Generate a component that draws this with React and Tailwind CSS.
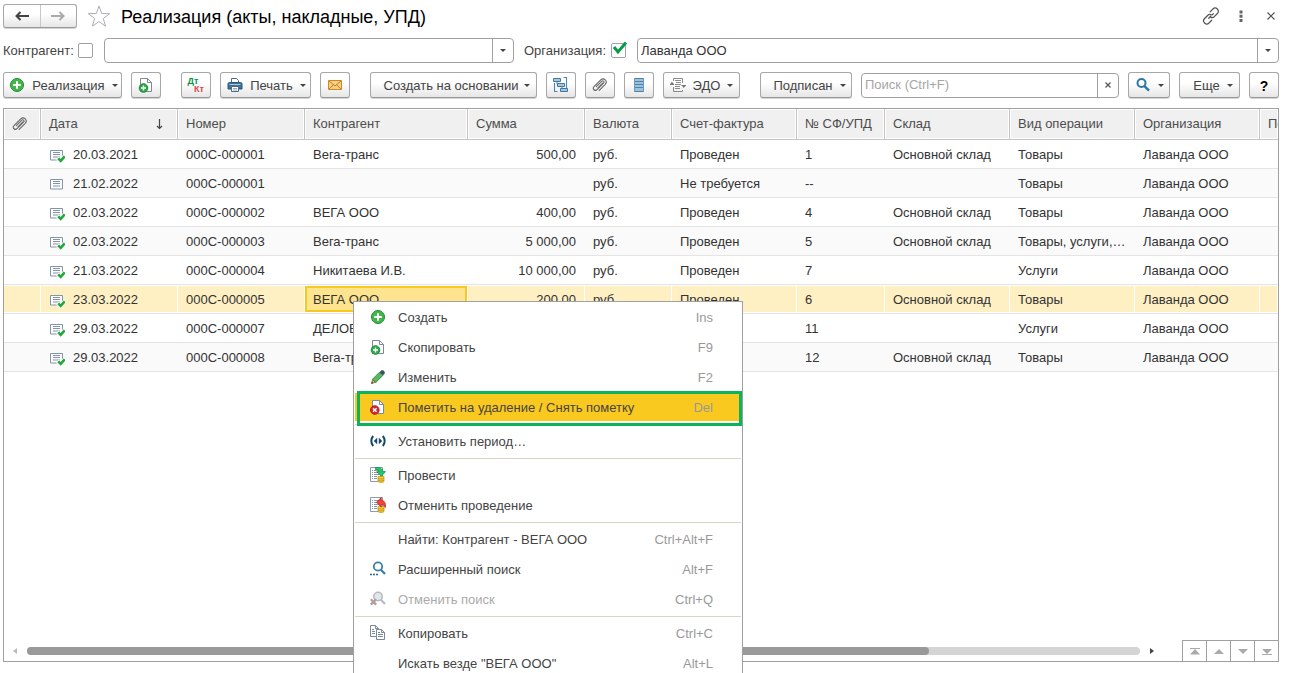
import React from "react";

const columns = [
  { key: "date", title: "Дата", width: "w-[137px]" },
  { key: "number", title: "Номер", width: "w-[127px]" },
  { key: "partner", title: "Контрагент", width: "w-[163px]" },
  { key: "sum", title: "Сумма", width: "w-[117px]" },
  { key: "currency", title: "Валюта", width: "w-[87px]" },
  { key: "invoice", title: "Счет-фактура", width: "w-[125px]" },
  { key: "invoiceNo", title: "№ СФ/УПД", width: "w-[88px]" },
  { key: "store", title: "Склад", width: "w-[125px]" },
  { key: "kind", title: "Вид операции", width: "w-[125px]" },
  { key: "org", title: "Организация", width: "w-[125px]" },
];

const store = "Основной склад";
const org = "Лаванда ООО";
const rows = [
  { date: "20.03.2021", number: "000С-000001", partner: "Вега-транс", sum: "500,00", currency: "руб.", invoice: "Проведен", invoiceNo: "1", store, kind: "Товары", org, posted: true },
  { date: "21.02.2022", number: "000С-000001", partner: "", sum: "", currency: "руб.", invoice: "Не требуется", invoiceNo: "--", store: "", kind: "Товары", org, posted: false },
  { date: "02.03.2022", number: "000С-000002", partner: "ВЕГА ООО", sum: "400,00", currency: "руб.", invoice: "Проведен", invoiceNo: "4", store, kind: "Товары", org, posted: true },
  { date: "02.03.2022", number: "000С-000003", partner: "Вега-транс", sum: "5 000,00", currency: "руб.", invoice: "Проведен", invoiceNo: "5", store, kind: "Товары, услуги,…", org, posted: true },
  { date: "21.03.2022", number: "000С-000004", partner: "Никитаева И.В.", sum: "10 000,00", currency: "руб.", invoice: "Проведен", invoiceNo: "7", store: "", kind: "Услуги", org, posted: true },
  { date: "23.03.2022", number: "000С-000005", partner: "ВЕГА ООО", sum: "200,00", currency: "руб.", invoice: "Проведен", invoiceNo: "6", store, kind: "Товары", org, posted: true, selected: true },
  { date: "29.03.2022", number: "000С-000007", partner: "ДЕЛОВОЙ", sum: "", currency: "", invoice: "", invoiceNo: "11", store: "", kind: "Услуги", org, posted: true },
  { date: "29.03.2022", number: "000С-000008", partner: "Вега-транс", sum: "", currency: "", invoice: "", invoiceNo: "12", store, kind: "Товары", org, posted: true },
];

function Icon({ children, className = "h-4 w-4" }) {
  return (
    <svg viewBox="0 0 16 16" className={`shrink-0 ${className}`} fill="none" aria-hidden="true">
      {children}
    </svg>
  );
}

const Plus = () => (
  <Icon>
    <circle cx="8" cy="8" r="6.5" fill="#45b749" stroke="#1f8a3b" />
    <path d="M8 4.2v7.6M4.2 8h7.6" stroke="#fff" strokeWidth="2" />
  </Icon>
);

const page = (
  <>
    <path d="M2.5 1.5h7l4 4v9h-11z" fill="#fff" stroke="#7a8a99" />
    <path d="M9.5 1.5v4h4" stroke="#7a8a99" />
  </>
);

const CopyAdd = () => (
  <Icon>
    {page}
    <circle cx="5.5" cy="11" r="4.3" fill="#2fa84a" stroke="#1f8a3b" />
    <path d="M5.5 8.500v5M3 11h5" stroke="#fff" strokeWidth="1.400" />
  </Icon>
);

const MarkDelete = () => (
  <Icon>
    {page}
    <circle cx="4.800" cy="11" r="4.300" fill="#d42a33" stroke="#b01c26" />
    <path d="M3 9.200l3.600 3.600M6.600 9.200L3 12.800" stroke="#fff" strokeWidth="1.300" />
  </Icon>
);

const Pencil = () => (
  <Icon>
    <path d="M1.500 14.500l1.200-4.200 3 3z" fill="#e9b45c" stroke="#7a5a2a" strokeWidth=".8" />
    <path d="M2.500 10.200l7-7 3.300 3.300-7 7z" fill="#57b85c" stroke="#2c7a3c" strokeWidth=".8" />
    <path d="M9.500 3.200l1.900-1.900h1.800l1.500 1.500v1.800L12.800 6.500z" fill="#3f5163" />
    <path d="M1.300 14.800l.6-2 1.300 1.300z" fill="#444" />
  </Icon>
);

const Period = () => (
  <Icon>
    <path d="M3.200 3C.7 5.800.7 10.200 3.200 13M12.800 3c2.500 2.800 2.500 7.200 0 10" stroke="#12486b" strokeWidth="2" />
    <path d="M7.200 4.800v6.400L3.800 8zM8.800 4.800v6.400L12.200 8z" fill="#12486b" />
  </Icon>
);

const docLines = (
  <>
    <path d="M.5.5h12v14H.5z" fill="#fff" stroke="#8a9cae" />
    <path d="M2 3.500h1M4 3.500h5M2 5.500h1M4 5.500h5M2 7.500h1M4 7.500h5M2 9.500h1M4 9.500h3M2 11.500h1M4 11.500h3" stroke="#8496a8" />
  </>
);

const coins = (
  <>
    <path d="M8 9.500h6v5c-1 1.300-5 1.300-6 0z" fill="#f7cf3c" stroke="#c99a18" strokeWidth=".8" />
    <path d="M8 11.300c1 1 5 1 6 0M8 13.200c1 1 5 1 6 0" stroke="#b98a12" strokeWidth=".8" />
  </>
);

const Post = () => (
  <Icon>
    {docLines}
    {coins}
    <path d="M5.500.6c4-.4 7 .7 7.300 4h2.700l-4.300 4.700-4.300-4.700h2.600c0-1.500-1.500-2.200-4-2z" fill="#22c86a" stroke="#0f9347" strokeWidth=".8" />
  </Icon>
);

const Unpost = () => (
  <Icon>
    {docLines}
    {coins}
    <path d="M11.200.6v2.600c3.200.4 5 3 4 7.300-.7-2-2-2.900-4-3v2.600L6.600 5.200z" fill="#f2423a" stroke="#b81f1f" strokeWidth=".8" />
  </Icon>
);

const AdvancedSearch = () => (
  <Icon>
    <circle cx="8" cy="5.500" r="4.200" stroke="#3d7ea6" strokeWidth="1.800" />
    <path d="M10.700 8.500l4.300 4.500" stroke="#3d7ea6" strokeWidth="2.200" />
    <path d="M0 13.500h2M3 13.500h2M6 13.500h2" stroke="#2f678c" strokeWidth="1.600" />
  </Icon>
);

const CancelSearch = () => (
  <Icon>
    <circle cx="8" cy="5.500" r="4.200" fill="#e3e7ea" stroke="#b5bcc2" strokeWidth="1.600" />
    <path d="M10.700 8.500l4.300 4.500" stroke="#b5bcc2" strokeWidth="2.200" />
    <path d="M.8 8.200l5.400 5.400M6.200 8.200L.8 13.600" stroke="#b29c9c" strokeWidth="2.200" />
  </Icon>
);

const CopyPages = () => (
  <Icon>
    <path d="M.5.5h5l3 3v8h-8z" fill="#fff" stroke="#7a8a99" />
    <path d="M5.500.500v3h3M2 4.500h2M2 6.500h3M2 8.500h3" stroke="#7a8a99" />
    <path d="M6.500 4.500h5l3 3v7h-8z" fill="#fff" stroke="#7a8a99" />
    <path d="M11.500 4.500v3h3M8 7.500h2M8 9.500h5M8 11.500h5" stroke="#7a8a99" />
  </Icon>
);

const Clip = () => (
  <Icon>
    <path
      d="M4.300 9.600l5.300-5.300c1.400-1.400 3.300.4 1.900 1.900l-6.200 6.200c-2.500 2.400-5.500-.5-3.100-3l6.300-6.300c3.300-3.200 7.800 1 4.500 4.500l-5.800 5.800M6 10.800l4.600-4.600"
      stroke="#666"
      strokeWidth="1.100"
      strokeLinecap="round"
    />
  </Icon>
);

const Structure = () => (
  <Icon>
    <path d="M10.500.5h3v12M1.500 6v8.500h3" stroke="#4d86b0" strokeWidth="1.100" />
    <path d="M4 4.500v3h3M9 9v3h2" stroke="#4d86b0" />
    <path d="M.5 1.500h7v3h-7zM4.500 6.500h7v3h-7zM7.500 11.500h7v3h-7z" fill="#a9c6dc" stroke="#3d78a4" />
  </Icon>
);

const Register = () => (
  <Icon>
    <path d="M3 1h10v14H3z" fill="#9fc0d8" />
    <path d="M3 1.500h10M3 4.500h10M3 7.500h10M3 10.500h10M3 14.500h10" stroke="#4a84ac" />
    <path d="M3.500 1v14M12.500 1v14" stroke="#6c9cbd" />
  </Icon>
);

const Edo = () => (
  <Icon>
    <path d="M3.500 4V1.500h9V6M3.500 10v4.500h9V13" stroke="#8a8a8a" />
    <path d="M5 3.500h6M6 5.500h5M5 7.500h6M5 9.500h5M5 11.500h5" stroke="#8a8a8a" />
    <path d="M0 7.500h4M11.500 8.500h4.500" stroke="#777" strokeWidth="1.200" />
    <path d="M2 4.500v3H0zM4 7.500H0L2.500 5zM12 8.500h4L13.500 11z" fill="#777" />
  </Icon>
);

const Printer = () => (
  <Icon>
    <path d="M4.500 6V1.500h5l2 2V6" fill="#fff" stroke="#4a6a85" />
    <path d="M2.500 5.500h11c1 0 1.500.5 1.500 1.500v5H1V7c0-1 .5-1.500 1.500-1.500z" fill="#3f7198" stroke="#2d5775" />
    <path d="M2.500 7.500h11" stroke="#a8c6dc" />
    <path d="M4.500 9.500h7v5h-7z" fill="#fff" stroke="#4a6a85" />
    <path d="M6 11.500h4M6 13h4" stroke="#7d97ab" strokeWidth=".8" />
  </Icon>
);

const Mail = () => (
  <Icon>
    <path d="M1.500 3.500h13v9h-13z" fill="#f9d083" stroke="#c98a28" />
    <path d="M2 4l6 5 6-5M2 12l4.500-4.200M14 12L9.500 7.800" stroke="#c07d1d" />
  </Icon>
);

const Lens = () => (
  <Icon>
    <circle cx="6.500" cy="6" r="4" stroke="#2f76a8" strokeWidth="2" />
    <path d="M9.200 8.800l4.800 4.800" stroke="#2f76a8" strokeWidth="2.400" />
  </Icon>
);

const Link = () => (
  <Icon className="h-[18px] w-[18px]">
    <g stroke="#555" strokeWidth="1.100" strokeLinecap="round">
      <path d="M7.200 4.300l2.500-2.500c1.300-1.300 2.900-1 3.900 0 1.200 1.200 1.300 2.800.1 4l-2.800 2.800c-1.100 1-2.300 1-3.300.4" />
      <path d="M8.600 11.800l-2.400 2.400c-1.300 1.200-2.900 1-3.900 0-1.200-1.200-1.300-2.700 0-4l2.700-2.700c1-1 2.200-1 3.200-.5" />
      <path d="M6 10l4-4" strokeDasharray="2.500 1.800" />
    </g>
  </Icon>
);

const DocState = ({ posted }) => (
  <Icon>
    <path d="M1.500 3.500h12v9.500h-12z" fill="#fbfcfd" stroke="#8495a8" />
    <path d="M4 5.500h7M4 7.500h7M4 10h7" stroke="#8495a8" />
    {posted && (
      <>
        <path d="M8.500 11l3 3L16 8.800" stroke="#fff" strokeWidth="4" />
        <path d="M9.200 11.300l2.500 2.500 4-4.500" stroke="#22a83a" strokeWidth="2.600" />
      </>
    )}
  </Icon>
);

const Caret = () => (
  <svg viewBox="0 0 6 3" className="h-[3px] w-[6px] shrink-0" aria-hidden="true">
    <path d="M0 0h6L3 3z" fill="#444" />
  </svg>
);

function Btn({ children, className = "", ...rest }) {
  return (
    <button
      type="button"
      className={`flex h-[26px] shrink-0 items-center justify-center whitespace-nowrap rounded-[3px] border border-[#a8a8a8] border-b-[#999] bg-linear-to-b from-white from-40% to-[#e6e6e6] text-[#444] shadow-[0_1px_0_#d4d4d4] ${className}`}
      {...rest}
    >
      {children}
    </button>
  );
}

const Label = ({ children }) => <span className="pt-[2px]">{children}</span>;

function Combo({ id, value, className }) {
  return (
    <div className={`flex h-[25px] overflow-hidden rounded-[4px] border border-[#a0a0a0] bg-white ${className}`}>
      <input id={id} defaultValue={value} className="min-w-0 flex-1 px-[3px] text-[#333] outline-none" />
      <button type="button" aria-label="Выбрать" className="flex w-[21px] items-center justify-center border-l border-[#a0a0a0]">
        <Caret />
      </button>
    </div>
  );
}

function Check({ label, checked, className }) {
  return (
    <span className={`relative h-[15px] w-[15px] shrink-0 ${className}`}>
      <input
        type="checkbox"
        aria-label={label}
        defaultChecked={checked}
        className="block h-[15px] w-[15px] appearance-none rounded-[2px] border border-[#a0a0a0] bg-white"
      />
      {checked && (
        <svg viewBox="0 0 16 14" className="pointer-events-none absolute -top-[2px] left-[1px] h-[14px] w-4" fill="none" aria-hidden="true">
          <path d="M2 6l4 5L14 1.500" stroke="#0a9a4a" strokeWidth="3" />
        </svg>
      )}
    </span>
  );
}

const menu = [
  { icon: <Plus />, text: "Создать", keys: "Ins" },
  { icon: <CopyAdd />, text: "Скопировать", keys: "F9" },
  { icon: <Pencil />, text: "Изменить", keys: "F2" },
  { icon: <MarkDelete />, text: "Пометить на удаление / Снять пометку", keys: "Del", active: true },
  null,
  { icon: <Period />, text: "Установить период…" },
  null,
  { icon: <Post />, text: "Провести" },
  { icon: <Unpost />, text: "Отменить проведение" },
  null,
  { text: "Найти: Контрагент - ВЕГА ООО", keys: "Ctrl+Alt+F" },
  { icon: <AdvancedSearch />, text: "Расширенный поиск", keys: "Alt+F" },
  { icon: <CancelSearch />, text: "Отменить поиск", keys: "Ctrl+Q", disabled: true },
  null,
  { icon: <CopyPages />, text: "Копировать", keys: "Ctrl+C" },
  { text: 'Искать везде "ВЕГА ООО"', keys: "Alt+L" },
];

function ContextMenu() {
  return (
    <div role="menu" className="absolute left-[353px] top-[301px] z-10 w-[390px] border border-[#a0a0a0] bg-white">
      {menu.map((item, i) =>
        item === null ? (
          <div key={i} role="separator" className="mx-px h-1 pt-[2px]">
            <div className="h-px bg-[#d9d5c3]" />
          </div>
        ) : (
          <div key={i} className="relative h-[30px] px-px py-px">
            <button
              type="button"
              role="menuitem"
              disabled={item.disabled}
              className={`flex h-full w-full items-center pl-[15px] pr-7 text-left ${item.active ? "bg-[#fac91f]" : ""} ${item.disabled ? "text-[#aaa]" : "text-[#444]"}`}
            >
              <span className="mr-3 flex w-4">{item.icon}</span>
              <span className="flex-1 pt-[2px]">{item.text}</span>
              <span className="pt-[2px] text-[#999]">{item.keys}</span>
            </button>
            {item.active && (
              <div className="pointer-events-none absolute -bottom-1 right-0 -top-px left-[3px] z-10 border-3 border-[#0cb35a]" />
            )}
          </div>
        ),
      )}
    </div>
  );
}

const th = "h-[31px] overflow-hidden whitespace-nowrap border-b border-r border-[#c4c4c4] bg-[#f0f0f0] px-2 text-left font-normal text-[#4d4d4d] shadow-[inset_0_0_0_1px_#fff]";

function Row({ row, index }) {
  const cell = row.selected
    ? "bg-[#fff0c4] shadow-[inset_-1px_1px_0_#fff,inset_0_-1px_0_#fff]"
    : index % 2
      ? "bg-[#fafafa]"
      : "bg-white";
  const td = `h-[29px] overflow-hidden whitespace-nowrap border-b border-[#e4e4e4] px-2 pt-[2px] ${cell}`;
  return (
    <tr>
      <td className={td} />
      {columns.map(({ key }) => {
        if (key === "date")
          return (
            <td key={key} className={td}>
              <div className="flex items-center gap-2">
                <DocState posted={row.posted} />
                {row.date}
              </div>
            </td>
          );
        if (key === "partner" && row.selected)
          return (
            <td key={key} className={`${td} relative`}>
              <div className="absolute bottom-px left-0 right-px top-px flex items-center border-2 border-[#fac91f] bg-[#ffe48f] px-[6px] pt-[2px]">
                {row.partner}
              </div>
            </td>
          );
        return (
          <td key={key} className={`${td} ${key === "sum" ? "pr-[9px] text-right" : ""}`}>
            {row[key]}
          </td>
        );
      })}
      <td className={td} />
    </tr>
  );
}

const scrollButtons = [
  ["В начало", "M3 5h10v1H3zM3 11.500h10L8 6z"],
  ["Вверх", "M3 11h10L8 6z"],
  ["Вниз", "M3 6h10l-5 5z"],
  ["В конец", "M3 11h10v1H3zM3 6h10l-5 5z"],
];

export default function App() {
  return (
    <div className="relative flex h-screen flex-col overflow-hidden bg-white pb-[11px] pl-[3px] pr-[10px] pt-1 font-['Liberation_Sans',Arial,sans-serif] text-[13px] leading-4 text-[#333]">
      <header className="flex h-6 items-center">
        <div className="flex h-6 w-[74px] rounded-[3px] border border-[#a8a8a8] border-b-[#999] bg-linear-to-b from-white from-40% to-[#e6e6e6] shadow-[0_1px_0_#d4d4d4]">
          <button type="button" aria-label="Назад" className="flex flex-1 items-center justify-center border-r border-[#c8c8c8]">
            <Icon>
              <path d="M2 8h13M6.500 4L2.500 8l4 4" stroke="#444" strokeWidth="2" />
            </Icon>
          </button>
          <button type="button" aria-label="Вперед" className="flex flex-1 items-center justify-center">
            <Icon>
              <path d="M1 8h13M9.500 4l4 4-4 4" stroke="#aaa" strokeWidth="2" />
            </Icon>
          </button>
        </div>
        <button type="button" aria-label="В избранное" className="ml-[10px]">
          <svg viewBox="0 0 24 24" className="h-6 w-6" fill="none" aria-hidden="true">
            <path d="M12 2l2.700 7.500 8 .2-6.400 4.800 2.300 7.700-6.600-4.600-6.600 4.600 2.300-7.700L1.300 9.700l8-.2z" stroke="#aab0b6" />
          </svg>
        </button>
        <h1 className="ml-[10px] flex-1 whitespace-nowrap pt-[2px] text-[18px] leading-6 text-black">Реализация (акты, накладные, УПД)</h1>
        <button type="button" aria-label="Ссылка" className="mr-[13px]">
          <Link />
        </button>
        <button type="button" aria-label="Меню" className="mr-[14px]">
          <Icon>
            <path d="M6.500 2.500h3v3h-3zM6.500 6.800h3v3h-3zM6.500 11h3v3h-3z" fill="#666" />
          </Icon>
        </button>
        <button type="button" aria-label="Закрыть">
          <Icon>
            <path d="M4.500 4.500l7 7M11.500 4.500l-7 7" stroke="#555" strokeWidth="1.200" />
          </Icon>
        </button>
      </header>

      <div className="mt-[10px] flex items-center">
        <label htmlFor="partner" className="w-[75px] shrink-0 text-[#444]">Контрагент:</label>
        <Check label="Отбор по контрагенту" className="mr-[11px]" />
        <Combo id="partner" value="" className="w-[410px]" />
        <label htmlFor="org" className="ml-[10px] w-[87px] shrink-0 text-[#444]">Организация:</label>
        <Check label="Отбор по организации" checked className="mr-[11px]" />
        <Combo id="org" value="Лаванда ООО" className="flex-1" />
      </div>

      <div className="mt-[9px] flex items-center gap-[9px]">
        <Btn className="w-[119px] gap-[7px] pl-[2px]">
          <Plus />
          <Label>Реализация</Label>
          <Caret />
        </Btn>
        <Btn className="mr-[11px] w-[30px]" aria-label="Скопировать"><CopyAdd /></Btn>
        <Btn className="w-[30px]" aria-label="Дт Кт">
          <span className="flex flex-col text-[9px] font-bold leading-[8px]">
            <span className="pr-[6px] text-[#0a9048]">Дт</span>
            <span className="pl-[6px] text-[#d84a4a]">Кт</span>
          </span>
        </Btn>
        <Btn className="w-[91px] gap-[7px] pl-[2px]">
          <Printer />
          <Label>Печать</Label>
          <Caret />
        </Btn>
        <Btn className="mr-[11px] w-[30px]" aria-label="Отправить"><Mail /></Btn>
        <Btn className="w-[167px] gap-[6px] pl-[7px]">
          <Label>Создать на основании</Label>
          <Caret />
        </Btn>
        <Btn className="w-[30px]" aria-label="Структура подчиненности"><Structure /></Btn>
        <Btn className="w-[30px]" aria-label="Файлы"><Clip /></Btn>
        <Btn className="w-[30px]" aria-label="Реестр"><Register /></Btn>
        <Btn className="mr-[11px] w-[77px] gap-[7px]">
          <Edo />
          <Label>ЭДО</Label>
          <Caret />
        </Btn>
        <Btn className="w-[92px] gap-[7px] pl-[7px]">
          <Label>Подписан</Label>
          <Caret />
        </Btn>
        <div className="flex h-[25px] min-w-0 flex-1 overflow-hidden rounded-[4px] border border-[#a0a0a0] bg-white">
          <input aria-label="Поиск" placeholder="Поиск (Ctrl+F)" className="min-w-0 flex-1 px-[3px] outline-none placeholder:text-[#a6a6a6]" />
          <button type="button" aria-label="Очистить" className="flex w-[21px] items-center justify-center border-l border-[#a0a0a0]">
            <Icon>
              <path d="M5.500 5.500l5 5M10.500 5.500l-5 5" stroke="#555" strokeWidth="1.200" />
            </Icon>
          </button>
        </div>
        <Btn className="w-[42px] gap-[7px]" aria-label="Найти">
          <Lens />
          <Caret />
        </Btn>
        <Btn className="w-[61px] gap-[7px] pl-[7px]">
          <Label>Еще</Label>
          <Caret />
        </Btn>
        <Btn className="w-[30px] text-[14px] font-bold text-black">
          <Label>?</Label>
        </Btn>
      </div>

      <main className="mt-[10px] flex min-h-0 flex-1 flex-col border border-[#a0a0a0]">
        <div className="min-h-0 flex-1 overflow-hidden">
          <table className="w-full table-fixed border-separate border-spacing-0">
            <thead>
              <tr>
                <th className={`${th} w-[37px]`}>
                  <Clip />
                </th>
                {columns.map((c) => (
                  <th key={c.key} className={`${th} ${c.width}`}>
                    {c.key === "date" ? (
                      <div className="flex items-center justify-between">
                        {c.title}
                        <Icon>
                          <path d="M6.500 3v9.500M4 10l2.500 2.500L9 10" stroke="#444" strokeWidth="1.200" />
                        </Icon>
                      </div>
                    ) : (
                      c.title
                    )}
                  </th>
                ))}
                <th className={`${th} border-r-0 pr-0`}>По</th>
              </tr>
            </thead>
            <tbody>
              {rows.map((row, i) => (
                <Row key={row.number + row.date} row={row} index={i} />
              ))}
            </tbody>
          </table>
        </div>
        <div className="flex h-[21px] items-center">
          <svg viewBox="0 0 4 6" className="ml-[9px] h-[6px] w-1" aria-hidden="true">
            <path d="M4 0v6L0 3z" fill="#bbb" />
          </svg>
          <div className="ml-[10px] h-2 flex-1 rounded-full bg-[#d4d4d4]">
            <div className="h-full w-[81%] rounded-full bg-[#999]" />
          </div>
          <svg viewBox="0 0 4 6" className="ml-[10px] mr-7 h-[6px] w-1" aria-hidden="true">
            <path d="M0 0v6l4-3z" fill="#444" />
          </svg>
          <div className="flex h-full border-t border-[#a0a0a0]">
            {scrollButtons.map(([label, d]) => (
              <button key={label} type="button" aria-label={label} className="flex w-6 items-center justify-center border-l border-[#a0a0a0]">
                <Icon>
                  <path d={d} fill="#aaa" />
                </Icon>
              </button>
            ))}
          </div>
        </div>
      </main>

      <ContextMenu />
    </div>
  );
}
